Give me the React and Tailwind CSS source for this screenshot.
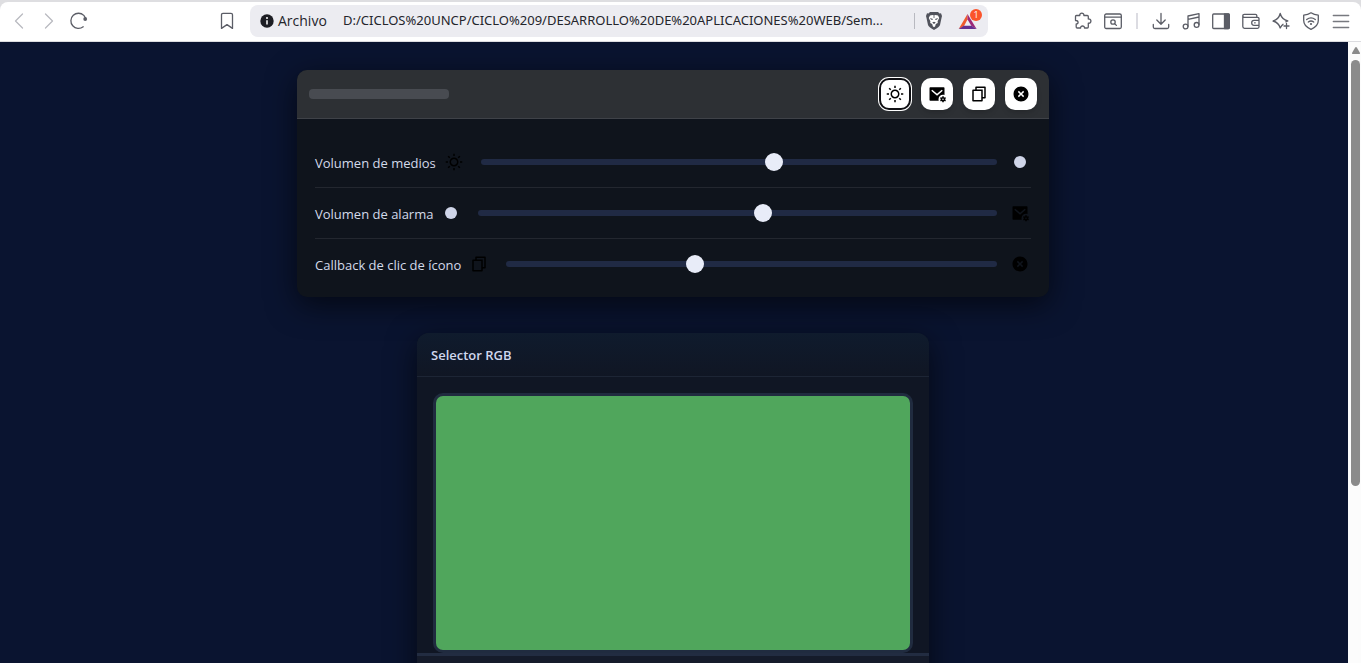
import React, { useState } from "react";
import {
  RiSunLine,
  RiMailSettingsFill,
  RiFileCopyLine,
  RiCloseCircleFill,
} from "react-icons/ri";

function Glyph({ children }) {
  return (
    <svg
      viewBox="0 0 20 20"
      fill="none"
      stroke="currentColor"
      strokeWidth="1.3"
      strokeLinecap="round"
      strokeLinejoin="round"
      aria-hidden="true"
      className="block size-5 shrink-0"
    >
      {children}
    </svg>
  );
}

function ToolButton({ label, children, tone = "text-[#5b5d66]" }) {
  return (
    <button type="button" aria-label={label} className={"flex size-5 shrink-0 items-center justify-center " + tone}>
      <Glyph>{children}</Glyph>
    </button>
  );
}

function BrowserBar() {
  return (
    <header className="shrink-0 border-t-2 border-[#dedee1] bg-[#dedee1]">
      <div className="flex h-10 items-center rounded-t-lg border-b border-[#dcdce0] bg-white px-2.5 pb-px">
        <nav aria-label="Navegación" className="flex gap-2.5">
          <ToolButton label="Atrás" tone="text-[#b9bac0]">
            <path d="M12.500 3 L5.500 10 L12.500 17" />
          </ToolButton>
          <ToolButton label="Adelante" tone="text-[#b9bac0]">
            <path d="M5.500 3 L12.500 10 L5.500 17" />
          </ToolButton>
          <ToolButton label="Recargar">
            <path d="M13.200 15.800 A7.600 7.600 0 1 1 13.800 4.400 L15.200 6.500" />
            <circle cx="15.200" cy="8" r="1.900" fill="currentColor" stroke="none" />
          </ToolButton>
        </nav>

        <div className="ml-[127px] flex min-w-0 items-center">
          <ToolButton label="Guardar marcador">
            <path d="M4.500 3.800 Q4.500 2.300 6 2.300 H14 Q15.500 2.300 15.500 3.800 V17.400 L10 13.600 L4.500 17.400 Z" />
          </ToolButton>
          <div className="ml-[13px] flex h-8 items-center rounded-lg bg-[#ececf1] px-2.5">
            <svg viewBox="0 0 14 14" className="size-3.5 shrink-0" aria-hidden="true">
              <circle cx="7" cy="7" r="6.700" fill="#1d1e24" />
              <circle cx="7" cy="4" r="1" fill="#fff" />
              <path d="M7 6.200 V10.400" stroke="#fff" strokeWidth="1.500" />
            </svg>
            <span className="ml-1 w-[65px] text-sm text-[#24252b]">Archivo</span>
            <input
              type="text"
              readOnly
              aria-label="Dirección"
              value="D:/CICLOS%20UNCP/CICLO%209/DESARROLLO%20DE%20APLICACIONES%20WEB/Sem..."
              className="w-[561px] min-w-0 bg-transparent font-['Noto_Sans','Open_Sans',sans-serif] text-[13px] text-[#24252b] outline-none"
            />
            <span className="ml-2.5 h-4 w-px bg-[#b8b9c0]" />
            <button type="button" aria-label="Escudos de Brave" className="ml-2.5">
              <svg viewBox="0 0 18 20" className="h-5 w-[18px]" aria-hidden="true">
                <path d="M5 1 H13 L14.500 2.500 L16 2.300 L17 5 L16.500 7 L15 14 Q14.500 16 9 19 Q3.500 16 3 14 L1.500 7 L1 5 L2 2.300 L3.500 2.500 Z" fill="#51535c" />
                <path d="M5 4.400 L7.500 4 L9 4.500 L10.500 4 L13 4.400 L14.200 7 L12.600 10.300 L12.800 12 L10.800 13 L10.200 15.300 L9 16.200 L7.800 15.300 L7.200 13 L5.200 12 L5.400 10.300 L3.800 7 Z" fill="#fff" />
                <path d="M5 7 L8 8 L7.300 9 L5.900 8.600 Z M13 7 L10 8 L10.700 9 L12.100 8.600 Z M7.200 11.600 L9 10.700 L10.800 11.600 L9 13 Z M8.600 4.500 H9.400 V7 H8.600 Z" fill="#51535c" />
              </svg>
            </button>
            <button type="button" aria-label="Recompensas de Brave" className="relative ml-[15px]">
              <svg viewBox="0 0 20 20" className="size-5" aria-hidden="true">
                <path d="M9.500 3 L0.700 18 L6 15 L9.500 8.600 Z" fill="#ef5a2e" />
                <path d="M9.500 3 L18.600 18 L13.500 15 L9.500 8.600 Z" fill="#9d2777" />
                <path d="M0.700 18 H18.600 L13.500 14.800 H5.800 Z" fill="#653090" />
              </svg>
              <span className="absolute -top-0.5 -right-1 flex size-3 items-center justify-center rounded-full bg-[#fb542b] text-[9px] text-white">
                1
              </span>
            </button>
          </div>
        </div>

        <div className="ml-auto flex items-center gap-2.5">
          <ToolButton label="Extensiones">
            <path d="M3.400 4.500 H6.800 C6.300 1.300 11.300 1.300 10.900 4.500 H14.300 Q15.300 4.500 15.300 5.500 V8 C18.800 7.500 18.800 12.700 15.300 12.200 V16 Q15.300 17 14.300 17 H11.500 C11.800 14.300 7.300 14.300 7.600 17 H4.200 Q3.200 17 3.200 16 V13 C5.800 13 5.800 9.500 2.500 9.500 V5.500 Q2.500 4.500 3.400 4.500 Z" />
          </ToolButton>
          <ToolButton label="Buscar pestañas">
            <rect x="1.700" y="3" width="16.600" height="14.500" rx="1.500" />
            <path d="M2 6.200 H18 M11.600 12.600 L13.400 14.400" />
            <circle cx="10" cy="11" r="2.200" />
          </ToolButton>
          <span className="mx-[3px] h-4 w-0.5 bg-[#dcdce2]" />
          <ToolButton label="Descargas">
            <path d="M10 2.500 V13 M5.800 9 L10 13.200 L14.200 9 M2.300 13.500 V16 Q2.300 17.500 3.800 17.500 H16.200 Q17.700 17.500 17.700 16 V13.500" />
          </ToolButton>
          <ToolButton label="Música">
            <path d="M7 15.300 V5 L18 2.700 V13.500 M7 8.300 L18 6" />
            <circle cx="4.600" cy="15.500" r="2.400" />
            <circle cx="15.600" cy="13.900" r="2.400" />
          </ToolButton>
          <ToolButton label="Barra lateral">
            <rect x="1.700" y="3" width="16.600" height="14.500" rx="1" />
            <path d="M13.500 3 H17.500 Q18.300 3 18.300 4 V16.500 Q18.300 17.500 17.500 17.500 H13.500 Z" fill="currentColor" />
          </ToolButton>
          <ToolButton label="Billetera">
            <path d="M15.800 6.300 V4.500 Q15.800 3.300 14.500 3.300 H3.300 Q1.800 3.300 1.800 4.800 V15.500 Q1.800 17.300 3.500 17.300 H16.500 Q18 17.300 18 15.800 V7.800 Q18 6.300 16.500 6.300 H3.300 Q1.800 6.300 1.800 4.800 M18 9.300 H13 Q10.700 9.300 10.700 11.800 Q10.700 14.300 13 14.300 H18 M13.600 11.800 H14.200" />
          </ToolButton>
          <ToolButton label="Asistente Leo">
            <path d="M12 13.300 Q10.600 14 9.200 17 Q7.800 11.600 2 10 Q7.800 8.300 9.200 2.500 Q10.800 8.300 16.800 10 L14.800 10.800 M15.500 12.500 V17.500 M13 15 H18" />
          </ToolButton>
          <ToolButton label="VPN">
            <path d="M10 1.800 Q13 4 17.300 4.200 V9.500 Q17.300 15.200 10 18.300 Q2.700 15.200 2.700 9.500 V4.200 Q7 4 10 1.800 Z M5.700 8.600 Q10 5.300 14.300 8.600 M7.300 11 Q10 9 12.700 11" />
            <circle cx="10" cy="13" r="1.100" fill="currentColor" stroke="none" />
          </ToolButton>
          <ToolButton label="Menú" tone="text-[#77797f]">
            <path d="M2.300 4.500 H17.700 M2.300 10.500 H17.700 M2.300 16.500 H17.700" />
          </ToolButton>
        </div>
      </div>
    </header>
  );
}

function ActionButton({ label, icon: Icon, focused }) {
  return (
    <button
      type="button"
      aria-label={label}
      className={
        "flex size-8 items-center justify-center rounded-[10px] bg-white text-black " +
        (focused ? "ring-1 ring-white inset-ring-2 inset-ring-[#101014]" : "shadow-md")
      }
    >
      <Icon size={18} />
    </button>
  );
}

function IconSlot({ icon: Icon }) {
  return (
    <span className="flex size-[18px] shrink-0 items-center justify-center text-black">
      {Icon ? <Icon size={18} /> : <span className="size-3 rounded-full bg-[#cfd5e8]" />}
    </span>
  );
}

function SliderRow({ id, label, start, end, initial }) {
  const [value, setValue] = useState(initial);
  return (
    <div className="flex h-[51px] items-center border-b border-[#23272f] pr-0.5 last:h-[50px] last:border-b-0">
      <label htmlFor={id} className="mr-[9px] shrink-0 pt-[3px] text-[13px] text-[#d3daea]">
        {label}
      </label>
      <IconSlot icon={start} />
      <input
        id={id}
        type="range"
        min="0"
        max="100"
        value={value}
        onChange={(e) => setValue(Number(e.target.value))}
        className="mr-3.5 ml-[18px] h-1.5 min-w-0 flex-1 appearance-none rounded-full bg-[#202a44] outline-none [&::-webkit-slider-thumb]:size-[18px] [&::-webkit-slider-thumb]:appearance-none [&::-webkit-slider-thumb]:rounded-full [&::-webkit-slider-thumb]:bg-[#e8ecf8]"
      />
      <IconSlot icon={end} />
    </div>
  );
}

function VolumePanel() {
  return (
    <section className="w-full max-w-[752px] shrink-0 overflow-hidden rounded-[10px] bg-[#0f141c] shadow-[0_8px_30px_rgba(0,0,0,0.6)]">
      <div className="flex items-center justify-between border-b border-[#3f4248] bg-[#2d3034] px-3 py-2">
        <div className="h-2.5 w-[140px] rounded bg-[#484b51]" />
        <div className="flex gap-2.5">
          <ActionButton label="Brillo" icon={RiSunLine} focused />
          <ActionButton label="Correo" icon={RiMailSettingsFill} />
          <ActionButton label="Copiar" icon={RiFileCopyLine} />
          <ActionButton label="Cerrar" icon={RiCloseCircleFill} />
        </div>
      </div>
      <div className="px-[18px] pt-[18px] pb-2">
        <SliderRow id="medios" label="Volumen de medios" start={RiSunLine} initial={57} />
        <SliderRow id="alarma" label="Volumen de alarma" end={RiMailSettingsFill} initial={55} />
        <SliderRow id="callback" label="Callback de clic de ícono" start={RiFileCopyLine} end={RiCloseCircleFill} initial={38} />
      </div>
    </section>
  );
}

function ColorPanel() {
  return (
    <section className="w-full max-w-lg shrink-0 overflow-hidden rounded-xl bg-[#101624] shadow-[0_8px_30px_rgba(0,0,0,0.6)]">
      <h2 className="border-b border-[#1d2535] bg-linear-to-b from-[#0f1b2d] to-[#101624] px-3.5 pt-3 pb-[11px] text-[13px] leading-5 font-semibold text-[#cfd7ee]">
        Selector RGB
      </h2>
      <div className="px-4 pt-4">
        <div className="h-[260px] rounded-[10px] border-3 border-[#202b3f] bg-[#50a65c]" />
      </div>
      <div className="h-24 border-t-3 border-[#222c41] bg-[#151b2a]" />
    </section>
  );
}

function ScrollTrack() {
  return (
    <div aria-hidden="true" className="flex w-[13px] shrink-0 flex-col items-center bg-[#fcfcfc] pt-1 pl-0.5">
      <svg viewBox="0 0 10 10" className="size-2.5">
        <path d="M5 1 Q5.500 1 6 1.800 L9 7 Q9.300 8 8.300 8 H1.700 Q0.700 8 1 7 L4 1.800 Q4.500 1 5 1 Z" fill="#8b8b8b" />
      </svg>
      <div className="mt-1 h-[69%] w-[9px] rounded-full bg-[#8b8b8b]" />
    </div>
  );
}

export default function App() {
  return (
    <div className="flex h-screen flex-col overflow-hidden font-['Open_Sans','Noto_Sans',sans-serif]">
      <BrowserBar />
      <div className="flex min-h-0 flex-1">
        <main className="flex min-w-0 flex-1 flex-col items-center gap-9 overflow-hidden bg-[#0a1430] pt-7 pr-0.5">
          <VolumePanel />
          <ColorPanel />
        </main>
        <ScrollTrack />
      </div>
    </div>
  );
}
